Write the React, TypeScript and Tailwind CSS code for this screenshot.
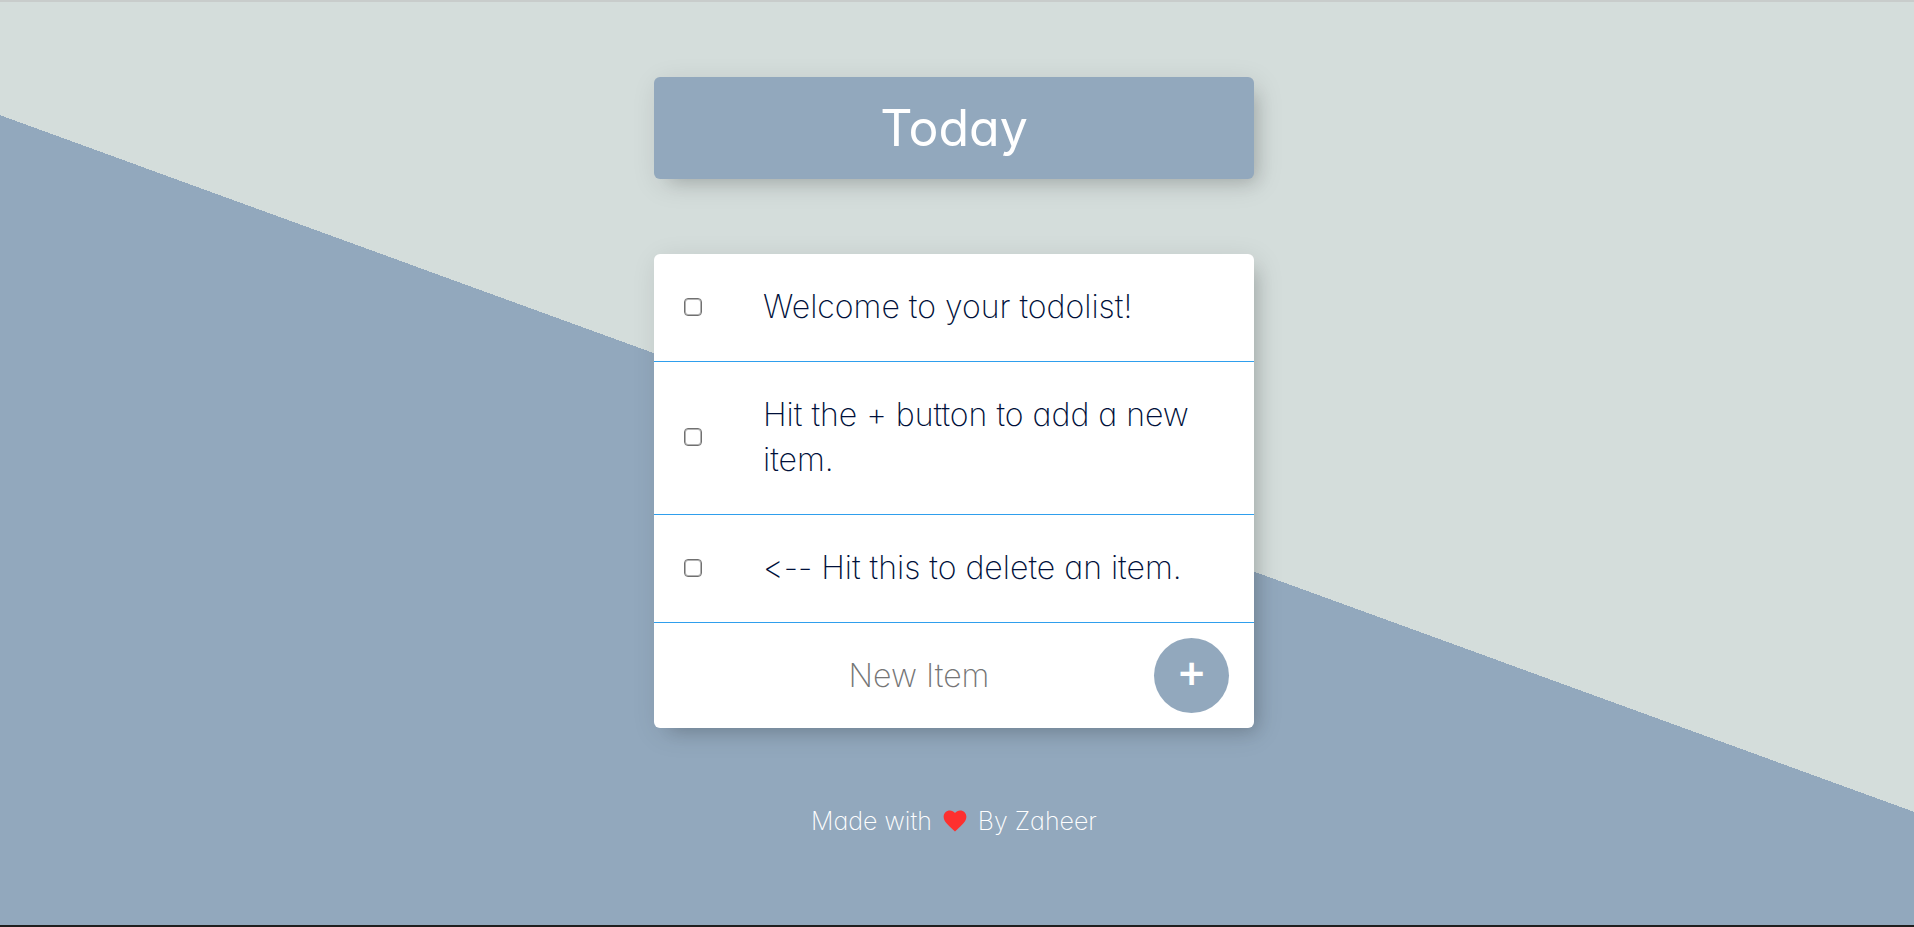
import { useState } from "react";
import type { FormEvent } from "react";
import { IoMdHeart } from "react-icons/io";

const initialItems = [
  "Welcome to your todolist!",
  "Hit the + button to add a new item.",
  "<-- Hit this to delete an item.",
];

const cardShadow =
  "shadow-[10px_10px_16px_-8px_rgba(0,0,0,0.16),4px_6px_28px_0px_rgba(0,0,0,0.11)]";

export default function App() {
  const [items, setItems] = useState(initialItems);
  const [draft, setDraft] = useState("");

  const addItem = (event: FormEvent) => {
    event.preventDefault();
    if (!draft.trim()) return;
    setItems([...items, draft.trim()]);
    setDraft("");
  };

  const removeItem = (index: number) =>
    setItems(items.filter((_, i) => i !== index));

  return (
    <div className="flex min-h-screen flex-col border-y-2 border-t-[#c8cccb] border-b-[#1f1f1f] bg-[linear-gradient(200deg,#d4dddb_50%,#92a8bd_50%)] bg-origin-padding pr-[22px] pl-4 font-['Inter',sans-serif] [font-feature-settings:'calt'_0,'cv11'_1]">
      <header
        className={`mx-auto mt-[75px] w-full max-w-[600px] rounded-md bg-[#92a8bd] py-4 text-center ${cardShadow}`}
      >
        <h1 className="text-[50px] leading-[70px] font-normal text-white">
          Today
        </h1>
      </header>

      <main
        className={`mx-auto mt-[75px] w-full max-w-[600px] rounded-md bg-white ${cardShadow}`}
      >
        <ul>
          {items.map((item, index) => (
            <li key={item} className="border-b border-[#2f9fed]">
              <label className="flex items-center gap-[61px] pt-[30px] pb-8 pr-5 pl-[30px] text-[32px] leading-[45px] font-extralight text-[#00103a]">
                <input
                  type="checkbox"
                  checked={false}
                  onChange={() => removeItem(index)}
                  className="size-[18px] shrink-0 appearance-none rounded-[4px] border border-[#707070] shadow-[inset_0_0_0_1px_#b4b4b4]"
                />
                <span>{item}</span>
              </label>
            </li>
          ))}
        </ul>
        <form
          onSubmit={addItem}
          className="flex items-center py-[15px] pr-[25px] pl-[30px]"
        >
          <input
            type="text"
            aria-label="New Item"
            placeholder="New Item"
            autoComplete="off"
            value={draft}
            onChange={(event) => setDraft(event.target.value)}
            className="h-[60px] min-w-0 flex-1 text-center text-[32px] font-extralight text-[#00103a] outline-none placeholder:text-[#757575]"
          />
          <button
            type="submit"
            aria-label="Add item"
            className="size-[75px] shrink-0 rounded-full bg-[#92a8bd] pb-3 text-[46px] leading-[60px] font-medium text-white"
          >
            +
          </button>
        </form>
      </main>

      <footer className="mt-[75px] flex items-center justify-center gap-[9px] pb-8 text-[25px] leading-9 font-extralight text-white">
        <span>Made with</span>
        <IoMdHeart className="size-7 text-[#fd302f]" aria-label="love" />
        <span>By Zaheer</span>
      </footer>
    </div>
  );
}
